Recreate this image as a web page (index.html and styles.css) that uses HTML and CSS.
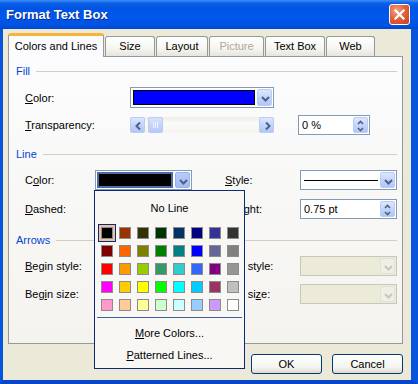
FILE: index.html
```html
<!DOCTYPE html>
<html lang="en">
<head>
    <meta charset="UTF-8">
    <link rel="stylesheet" href="styles.css">
    <title>Format Text Box</title>
</head>
<body>
    <div class="window">
        <div class="titlebar">
            <span class="title">Format Text Box</span>
            <span class="close">
                <svg width="19" height="19" viewBox="0 0 19 19"><path d="M5.5 5.5 L13.5 13.5 M13.5 5.5 L5.5 13.5" stroke="#fff" stroke-width="2.2" stroke-linecap="square"/></svg>
            </span>
        </div>
        <div class="client">
            <div class="tabs">
                <div class="tab active">Colors and Lines</div>
                <div class="tab size">Size</div>
                <div class="tab layout">Layout</div>
                <div class="tab picture disabled">Picture</div>
                <div class="tab textbox">Text Box</div>
                <div class="tab web">Web</div>
            </div>
            <div class="panel">
                <div class="group">Fill</div>
                <div class="fill-grid">
                    <span><u>C</u>olor:</span>
                    <div class="combo">
                        <span class="swatch fill-color"></span>
                        <span class="drop"><svg width="15" height="17" viewBox="0 0 15 17"><path d="M4 7 L7.5 10.5 L11 7" fill="none" stroke="#4d6185" stroke-width="2"/></svg></span>
                    </div>
                    <span></span>
                    <span></span>

                    <span><u>T</u>ransparency:</span>
                    <div class="slider">
                        <span class="sbtn"><svg width="15" height="16" viewBox="0 0 15 16"><path d="M9 4.5 L5.5 8 L9 11.5" fill="none" stroke="#4d6185" stroke-width="2"/></svg></span>
                        <span class="thumb"></span>
                        <span class="track"></span>
                        <span class="sbtn"><svg width="15" height="16" viewBox="0 0 15 16"><path d="M6 4.5 L9.5 8 L6 11.5" fill="none" stroke="#4d6185" stroke-width="2"/></svg></span>
                    </div>
                    <span></span>
                    <div class="spin">
                        <span class="val">0 %</span>
                        <span class="spin-btn"><svg width="13" height="16" viewBox="0 0 13 16"><path d="M4 6 L6.5 3.5 L9 6 M4 10 L6.5 12.5 L9 10" fill="none" stroke="#4d6185" stroke-width="1.6"/></svg></span>
                    </div>
                </div>

                <div class="group line-group">Line</div>
                <div class="line-grid">
                    <span>C<u>o</u>lor:</span>
                    <div class="combo open">
                        <span class="swatch line-color"></span>
                        <span class="drop"><svg width="15" height="17" viewBox="0 0 15 17"><path d="M4 7 L7.5 10.5 L11 7" fill="none" stroke="#4d6185" stroke-width="2"/></svg></span>
                    </div>
                    <span></span>
                    <span><u>S</u>tyle:</span>
                    <div class="combo">
                        <span class="line-style"></span>
                        <span class="drop"><svg width="15" height="17" viewBox="0 0 15 17"><path d="M4 7 L7.5 10.5 L11 7" fill="none" stroke="#4d6185" stroke-width="2"/></svg></span>
                    </div>

                    <span><u>D</u>ashed:</span>
                    <div class="combo">
                        <span class="line-style"></span>
                        <span class="drop"></span>
                    </div>
                    <span></span>
                    <span><u>W</u>eight:</span>
                    <div class="spin">
                        <span class="val">0.75 pt</span>
                        <span class="spin-btn"><svg width="13" height="16" viewBox="0 0 13 16"><path d="M4 6 L6.5 3.5 L9 6 M4 10 L6.5 12.5 L9 10" fill="none" stroke="#4d6185" stroke-width="1.6"/></svg></span>
                    </div>
                </div>

                <div class="group arrows-group">Arrows</div>
                <div class="line-grid arrows-grid">
                    <span><u>B</u>egin style:</span>
                    <div class="combo"></div>
                    <span></span>
                    <span><u>E</u>nd style:</span>
                    <div class="combo disabled">
                        <span class="blank"></span>
                        <span class="drop"><svg width="15" height="17" viewBox="0 0 15 17"><path d="M4 7 L7.5 10.5 L11 7" fill="none" stroke="#c9c7ba" stroke-width="2"/></svg></span>
                    </div>

                    <span>Beg<u>i</u>n size:</span>
                    <div class="combo"></div>
                    <span></span>
                    <span>End si<u>z</u>e:</span>
                    <div class="combo disabled">
                        <span class="blank"></span>
                        <span class="drop"><svg width="15" height="17" viewBox="0 0 15 17"><path d="M4 7 L7.5 10.5 L11 7" fill="none" stroke="#c9c7ba" stroke-width="2"/></svg></span>
                    </div>
                </div>
            </div>
            <div class="buttons">
                <button class="btn">OK</button>
                <button class="btn">Cancel</button>
            </div>
        </div>

        <div class="popup">
            <div class="no-line">No Line</div>
            <div class="palette" id="palette"></div>
            <div class="sep"></div>
            <div class="item"><u>M</u>ore Colors...</div>
            <div class="item"><u>P</u>atterned Lines...</div>
        </div>
    </div>
    <script>
        const colores = [
            "#000000","#993300","#333300","#003300","#003366","#000080","#333399","#333333",
            "#800000","#ff6600","#808000","#008000","#008080","#0000ff","#666699","#808080",
            "#ff0000","#ff9900","#99cc00","#339966","#33cccc","#3366ff","#800080","#969696",
            "#ff00ff","#ffcc00","#ffff00","#00ff00","#00ffff","#00ccff","#993366","#c0c0c0",
            "#ff99cc","#ffcc99","#ffff99","#ccffcc","#ccffff","#99ccff","#cc99ff","#ffffff"
        ];
        const palette = document.getElementById("palette");
        colores.forEach((c, i) => {
            const cell = document.createElement("span");
            cell.className = i == 0 ? "cell selected" : "cell";
            const sw = document.createElement("span");
            sw.className = "chip";
            sw.style.background = c;
            cell.append(sw);
            palette.append(cell);
        });
    </script>
</body>
</html>
```

FILE: styles.css
```css
* {
    box-sizing: border-box;
}
body {
    margin: 0;
    width: 418px;
    height: 384px;
    overflow: hidden;
    background: #ece9d8;
    font-family: "Liberation Sans", Arial, sans-serif;
    font-size: 11px;
    color: #000;
}
.window {
    position: relative;
    height: 384px;
    display: flex;
    flex-direction: column;
    background: #ece9d8;
    border-left: 3px solid #0855dd;
    border-right: 7px solid #0855dd;
    border-bottom: 4px solid #0846c8;
}

/* title bar */
.titlebar {
    height: 29px;
    margin-left: -3px;
    margin-right: -7px;
    padding: 0 8px 0 6px;
    display: flex;
    align-items: center;
    justify-content: space-between;
    background: linear-gradient(#3d8cf5 0%, #0a5ee6 12%, #0054e3 30%, #0058ee 60%, #0052e0 88%, #0046d0 100%);
}
.title {
    color: #fff;
    font-weight: bold;
    font-size: 13px;
    text-shadow: 1px 1px 0 #0a2a8c;
}
.close {
    width: 21px;
    height: 21px;
    border: 1px solid #fff;
    border-radius: 3px;
    background: radial-gradient(circle at 35% 30%, #f0a488 0%, #e2643f 45%, #c63c18 100%);
    display: flex;
    align-items: center;
    justify-content: center;
}

/* client area */
.client {
    flex: 1;
    padding: 4px 8px 0 5px;
}
.tabs {
    display: flex;
    align-items: flex-end;
    height: 23px;
}
.tab {
    height: 20px;
    line-height: 19px;
    margin-left: 1px;
    text-align: center;
    border: 1px solid #919b9c;
    border-bottom: none;
    border-radius: 3px 3px 0 0;
    background: linear-gradient(#ffffff, #f6f5f1 60%, #e6e4dc);
}
.tab.active {
    width: 96px;
    height: 24px;
    margin-left: 0;
    margin-bottom: -1px;
    line-height: 20px;
    position: relative;
    z-index: 1;
    border-top: 3px solid #f8b438;
    background: #fcfcfe;
}
.tab.size { width: 50px; }
.tab.layout { width: 52px; }
.tab.picture { width: 55px; }
.tab.textbox { width: 60px; }
.tab.web { width: 49px; }
.tab.disabled {
    color: #aca899;
}

.panel {
    height: 288px;
    border: 1px solid #919b9c;
    background: linear-gradient(#fcfcfe, #f4f3ee);
    padding: 7px 5px 0 7px;
}
.group {
    display: flex;
    align-items: center;
    gap: 6px;
    height: 14px;
    color: #0046d5;
}
.group::after {
    content: "";
    flex: 1;
    height: 1px;
    background: #d0d0bf;
}
.line-group {
    margin-top: 12px;
}
.arrows-group {
    margin-top: 14px;
}

.fill-grid {
    display: grid;
    grid-template-columns: 105px 144px 24px 72px;
    grid-template-rows: 21px 20px;
    row-gap: 7px;
    align-items: center;
    margin: 9px 0 0 9px;
}
.line-grid {
    display: grid;
    grid-template-columns: 70px 97px 33px 75px 97px;
    grid-auto-rows: 20px;
    row-gap: 9px;
    align-items: center;
    margin: 9px 0 0 9px;
}
.arrows-grid {
    row-gap: 8px;
}

/* combo boxes */
.combo {
    height: 100%;
    display: flex;
    padding: 1px;
    border: 1px solid #7f9db9;
    background: #fff;
}
.combo .drop {
    width: 15px;
    margin-left: auto;
    border: 1px solid #b9ccf5;
    border-radius: 2px;
    background: linear-gradient(#dde7fd, #c4d4fb 50%, #b2c6f6);
}
.combo.open .drop {
    background: linear-gradient(#b8cbf8, #a3bbf2);
    border-color: #98b0ea;
}
.swatch {
    flex: 1;
    margin: 1px 2px 1px 1px;
}
.fill-color {
    background: #0000ff;
    border: 1px solid #000;
}
.line-color {
    margin: 0 2px 0 0;
    background: #000;
    border: 2px solid #4a6aa8;
}
.line-style {
    flex: 1;
    margin-right: 2px;
    background: linear-gradient(transparent 8px, #000 8px, #000 9px, transparent 9px);
    margin-left: 2px;
}
.combo.disabled {
    border-color: #c9c7ba;
    background: #ecead9;
}
.combo.disabled .blank {
    flex: 1;
}
.combo.disabled .drop {
    border-color: #e2e0d4;
    background: #f0efe6;
}

/* slider */
.slider {
    height: 16px;
    display: flex;
    align-items: stretch;
    background: linear-gradient(#eeede5, #fbfbf9 40%, #f5f4ef);
}
.sbtn {
    width: 15px;
    border: 1px solid #b9ccf5;
    border-radius: 2px;
    background: linear-gradient(#dde7fd, #c4d4fb 50%, #b2c6f6);
}
.thumb {
    width: 15px;
    margin-left: 3px;
    border: 1px solid #b9ccf5;
    border-radius: 2px;
    background:
        linear-gradient(90deg, transparent 4px, #eef3fe 4px, #eef3fe 5px, transparent 5px, transparent 6px, #eef3fe 6px, #eef3fe 7px, transparent 7px, transparent 8px, #eef3fe 8px, #eef3fe 9px, transparent 9px) center / 13px 6px no-repeat,
        linear-gradient(#d8e3fd, #c4d4fb 50%, #b6c9f7);
}
.track {
    flex: 1;
}

/* spinners */
.spin {
    height: 100%;
    display: flex;
    align-items: center;
    padding: 1px 1px 1px 3px;
    border: 1px solid #7f9db9;
    background: #fff;
}
.spin .val {
    flex: 1;
}
.spin-btn {
    width: 15px;
    height: 16px;
    display: flex;
    justify-content: center;
    border: 1px solid #b9ccf5;
    border-radius: 2px;
    background: linear-gradient(#dde7fd, #c4d4fb 50%, #b2c6f6);
}

/* bottom buttons */
.buttons {
    display: flex;
    justify-content: flex-end;
    gap: 10px;
    margin-top: 10px;
}
.btn {
    width: 71px;
    height: 20px;
    padding: 0;
    font-family: "Liberation Sans", Arial, sans-serif;
    font-size: 11px;
    color: #000;
    border: 1px solid #003c74;
    border-radius: 3px;
    background: linear-gradient(#ffffff, #f3f3ef 70%, #dcd8cc);
}

/* colour popup */
.popup {
    position: absolute;
    left: 91px;
    top: 190px;
    width: 151px;
    height: 179px;
    padding: 0 3px;
    border: 1px solid #0a2a78;
    background: #f8f7f4;
}
.no-line {
    height: 24px;
    line-height: 24px;
    margin-top: 5px;
    text-align: center;
}
.palette {
    display: grid;
    grid-template-columns: repeat(8, 18px);
    grid-auto-rows: 18px;
    margin-top: 4px;
}
.cell {
    display: flex;
    align-items: center;
    justify-content: center;
}
.cell.selected {
    border: 1px solid #0a2a78;
    background: #eec2a0;
}
.chip {
    width: 12px;
    height: 12px;
    border: 1px solid #8c8c8c;
}
.sep {
    height: 1px;
    margin: 3px -1px 0;
    background: #3f5f9f;
}
.item {
    height: 22px;
    line-height: 22px;
    text-align: center;
}
.sep + .item {
    margin-top: 4px;
}
```
